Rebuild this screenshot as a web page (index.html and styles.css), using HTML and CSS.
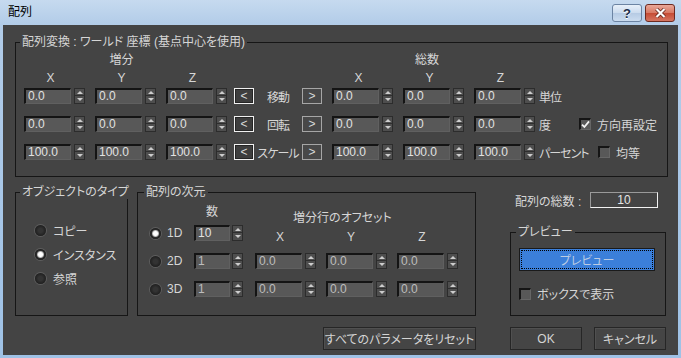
FILE: index.html
```html
<!DOCTYPE html>
<html lang="ja">
<head>
  <meta charset="UTF-8" />
  <title>配列</title>
  <link rel="stylesheet" href="styles.css">
</head>
<body>
<div class="window">

  <div class="titlebar">
    <span class="title">配列</span>
    <div class="caption-btns">
      <div class="cbtn help">?</div>
      <div class="cbtn close">
        <svg width="13" height="10" viewBox="0 0 13 10"><path d="M2.5 1 L10.5 9 M10.5 1 L2.5 9" stroke="#5b1d14" stroke-width="3.6"/><path d="M2.5 1 L10.5 9 M10.5 1 L2.5 9" stroke="#fff" stroke-width="2.2"/></svg>
      </div>
    </div>
  </div>

  <div class="client">

    <!-- transform group -->
    <fieldset class="group">
      <legend>配列変換 : ワールド 座標 (基点中心を使用)</legend>
      <div class="xform">
        <div class="hdr"><span>増分</span><span class="r">総数</span></div>
        <div class="axes">
          <span>X</span><span>Y</span><span>Z</span>
          <span class="r">X</span><span>Y</span><span>Z</span>
        </div>

        <div class="xrow">
          <div class="spin"><div class="field">0.0</div><div class="arrows"></div></div>
          <div class="spin"><div class="field">0.0</div><div class="arrows"></div></div>
          <div class="spin"><div class="field">0.0</div><div class="arrows"></div></div>
          <div class="mover"><div class="mv lit">&lt;</div><span class="mvlabel">移動</span><div class="mv">&gt;</div></div>
          <div class="spin"><div class="field">0.0</div><div class="arrows"></div></div>
          <div class="spin"><div class="field">0.0</div><div class="arrows"></div></div>
          <div class="spin"><div class="field">0.0</div><div class="arrows"></div></div>
          <span class="unit">単位</span>
        </div>

        <div class="xrow">
          <div class="spin"><div class="field">0.0</div><div class="arrows"></div></div>
          <div class="spin"><div class="field">0.0</div><div class="arrows"></div></div>
          <div class="spin"><div class="field">0.0</div><div class="arrows"></div></div>
          <div class="mover"><div class="mv lit">&lt;</div><span class="mvlabel">回転</span><div class="mv">&gt;</div></div>
          <div class="spin"><div class="field">0.0</div><div class="arrows"></div></div>
          <div class="spin"><div class="field">0.0</div><div class="arrows"></div></div>
          <div class="spin"><div class="field">0.0</div><div class="arrows"></div></div>
          <span class="unit">度</span>
          <label class="chk">
            <span class="box"><svg width="9" height="9" viewBox="0 0 9 9"><path d="M1 4.6 L3.4 7 L8 1.4" stroke="#f2f2f2" stroke-width="1.8" fill="none"/></svg></span>方向再設定
          </label>
        </div>

        <div class="xrow">
          <div class="spin"><div class="field">100.0</div><div class="arrows"></div></div>
          <div class="spin"><div class="field">100.0</div><div class="arrows"></div></div>
          <div class="spin"><div class="field">100.0</div><div class="arrows"></div></div>
          <div class="mover"><div class="mv lit">&lt;</div><span class="mvlabel">スケール</span><div class="mv">&gt;</div></div>
          <div class="spin"><div class="field">100.0</div><div class="arrows"></div></div>
          <div class="spin"><div class="field">100.0</div><div class="arrows"></div></div>
          <div class="spin"><div class="field">100.0</div><div class="arrows"></div></div>
          <span class="unit">パーセント</span>
          <label class="chk eq"><span class="box"></span>均等</label>
        </div>
      </div>
    </fieldset>

    <div class="lower">

      <fieldset class="group">
        <legend>オブジェクトのタイプ</legend>
        <div class="types">
          <label class="opt"><i class="radio"></i>コピー</label>
          <label class="opt"><i class="radio on"></i>インスタンス</label>
          <label class="opt"><i class="radio"></i>参照</label>
        </div>
      </fieldset>

      <fieldset class="group dimgroup">
        <legend>配列の次元</legend>
        <div class="dim">
          <span class="num-hdr">数</span>
          <span class="off-hdr">増分行のオフセット</span>

          <label class="opt"><i class="radio on"></i>1D</label>
          <div class="spin small"><div class="field">10</div><div class="arrows"></div></div>
          <span class="ax">X</span><span class="ax">Y</span><span class="ax">Z</span>

          <label class="opt"><i class="radio"></i>2D</label>
          <div class="spin small off"><div class="field">1</div><div class="arrows"></div></div>
          <div class="spin off"><div class="field">0.0</div><div class="arrows"></div></div>
          <div class="spin off"><div class="field">0.0</div><div class="arrows"></div></div>
          <div class="spin off"><div class="field">0.0</div><div class="arrows"></div></div>

          <label class="opt"><i class="radio"></i>3D</label>
          <div class="spin small off"><div class="field">1</div><div class="arrows"></div></div>
          <div class="spin off"><div class="field">0.0</div><div class="arrows"></div></div>
          <div class="spin off"><div class="field">0.0</div><div class="arrows"></div></div>
          <div class="spin off"><div class="field">0.0</div><div class="arrows"></div></div>
        </div>
      </fieldset>

      <div class="side">
        <div class="total">
          <span>配列の総数 :</span>
          <div class="total-field">10</div>
        </div>
        <fieldset class="group preview">
          <legend>プレビュー</legend>
          <div class="preview-body">
            <button class="btn blue">プレビュー</button>
            <label class="chk"><span class="box"></span>ボックスで表示</label>
          </div>
        </fieldset>
      </div>

      <button class="btn reset">すべてのパラメータをリセット</button>
      <div class="okcancel">
        <button class="btn">OK</button>
        <button class="btn">キャンセル</button>
      </div>

    </div>
  </div>
</div>
</body>
</html>
```

FILE: styles.css
```css
* {
  box-sizing: border-box;
  margin: 0;
  padding: 0;
}

body {
  width: 681px;
  height: 358px;
  overflow: hidden;
  font-family: "Liberation Sans", "Noto Sans CJK JP", sans-serif;
  font-size: 12px;
  font-feature-settings: "palt";
  color: #d6d6d6;
  background: #444;
}

.window {
  width: 681px;
  height: 358px;
  padding: 0 3px 3px;
  background: linear-gradient(#c6daef, #b2cce8 25px, #9fc2e6);
}

/* title bar */
.titlebar {
  height: 25px;
  display: flex;
  justify-content: space-between;
  padding: 0 3px 0 5px;
}

.title {
  color: #000;
  line-height: 24px;
  font-size: 12px;
}

.caption-btns {
  display: flex;
  gap: 3px;
  margin-top: 4px;
}

.cbtn {
  width: 30px;
  height: 18px;
  border-radius: 3px;
  display: flex;
  align-items: center;
  justify-content: center;
}

.help {
  border: 1px solid #6c84a3;
  background: linear-gradient(#e8f0f9, #cbdbee 50%, #b5cae3 50%, #cbdcef);
  color: #1d2e48;
  font-weight: bold;
  font-size: 13px;
  text-shadow: 0 1px 0 #fff;
}

.close {
  border: 1px solid #6d2a20;
  background: linear-gradient(#eaa898, #d77863 50%, #c54a33 50%, #d57561);
}

/* client area */
.client {
  height: 330px;
  padding: 10px 10px 0 12px;
  background: #444;
}

.group {
  border: 1px solid #161616;
  min-width: 0;
}

.group legend {
  margin-left: 4px;
  padding: 0 2px;
  line-height: 14px;
  white-space: nowrap;
}

/* transform */
.xform {
  padding: 4px 0 16px 8px;
}

.hdr,
.axes {
  display: flex;
  line-height: 14px;
  height: 14px;
}

.hdr span {
  width: 195px;
  text-align: center;
}

.hdr .r {
  width: 190px;
  margin-left: 113px;
}

.axes {
  margin-top: 4px;
  margin-bottom: 3px;
}

.axes span {
  width: 53px;
  text-align: center;
}

.axes span + span {
  margin-left: 18px;
}

.axes span.r {
  margin-left: 113px;
}

.xrow {
  display: flex;
  align-items: center;
  height: 16px;
}

.xrow + .xrow {
  margin-top: 12px;
}

.xrow .spin + .spin {
  margin-left: 10px;
}

.mover {
  display: flex;
  align-items: center;
  margin: 0 10px 0 7px;
}

.mv {
  width: 20px;
  height: 16px;
  border: 1px solid #a6a6a6;
  background: #484848;
  display: flex;
  align-items: center;
  justify-content: center;
  line-height: 1;
  color: #d8d8d8;
}

.mv.lit {
  border-color: #f0f0f0;
  background: #3e3e3e;
  box-shadow: inset 0 0 0 1px #252525;
}

.mvlabel {
  width: 48px;
  text-align: center;
  white-space: nowrap;
  letter-spacing: -1px;
}

.unit {
  width: 40px;
  margin-left: 4px;
  white-space: nowrap;
  letter-spacing: -1px;
}

/* spinner */
.spin {
  display: flex;
  gap: 3px;
}

.field {
  width: 47px;
  height: 16px;
  padding-left: 2px;
  line-height: 13px;
  background: #585858;
  border-top: 2px solid #141414;
  border-left: 2px solid #141414;
  border-right: 1px solid #606060;
  border-bottom: 1px solid #606060;
  color: #e2e2e2;
  white-space: nowrap;
}

.arrows {
  width: 11px;
  height: 16px;
  border: 1px solid #2c2c2c;
  background: linear-gradient(transparent 6px, #2e2e2e 6px 7px, transparent 7px) #4e4e4e;
  display: flex;
  flex-direction: column;
  align-items: center;
  justify-content: space-around;
}

.arrows::before {
  content: '';
  border: 3px solid transparent;
  border-top: 0;
  border-bottom: 3px solid #cdcdcd;
}

.arrows::after {
  content: '';
  border: 3px solid transparent;
  border-bottom: 0;
  border-top: 3px solid #cdcdcd;
}

.spin.small {
  gap: 2px;
}

.spin.small .field {
  width: 36px;
}

.spin.off .field {
  color: #bdbdbd;
}

/* checkbox + radio */
.chk {
  display: flex;
  align-items: center;
  gap: 6px;
  white-space: nowrap;
}

.chk.eq {
  margin-left: 19px;
}

.box {
  width: 12px;
  height: 12px;
  background: #585858;
  border-top: 2px solid #151515;
  border-left: 2px solid #151515;
  border-right: 1px solid #666;
  border-bottom: 1px solid #666;
  display: flex;
  align-items: center;
  justify-content: center;
}

.opt {
  display: flex;
  align-items: center;
  gap: 7px;
  height: 14px;
  white-space: nowrap;
}

.radio {
  width: 11px;
  height: 11px;
  border-radius: 50%;
  background: radial-gradient(circle, #333 0 2px, #222 5px);
  box-shadow: 0 0 0 1px #5e5e5e;
}

.radio.on {
  background: radial-gradient(circle, #fff 0 2px, #b8b8b8 3px, #2c2c2c 4px, #1e1e1e 5.5px);
}

/* lower part */
.lower {
  display: grid;
  grid-template-columns: 113px 339px 181px;
  column-gap: 9px;
  row-gap: 11px;
  margin-top: 8px;
}

.types {
  display: flex;
  flex-direction: column;
  gap: 10px;
  padding: 24px 0 0 19px;
}

.dimgroup legend {
  margin-left: 6px;
}

.dim {
  display: grid;
  grid-template-columns: 34px 51px 61px 61px 61px;
  grid-template-rows: 20px 16px 28px 28px;
  column-gap: 10px;
  align-items: end;
  padding: 6px 0 0 12px;
}

.dim .opt {
  gap: 6px;
  height: 16px;
}

.num-hdr {
  grid-column: 2;
  width: 36px;
  text-align: center;
  align-self: start;
  line-height: 14px;
}

.off-hdr {
  grid-column: 3 / 6;
  padding-left: 38px;
  line-height: 14px;
  white-space: nowrap;
}

.ax {
  width: 50px;
  text-align: center;
  line-height: 14px;
  margin-bottom: -3px;
}

.side {
  padding-left: 25px;
}

.total {
  display: flex;
  align-items: center;
  height: 16px;
  margin-top: 7px;
  padding: 0 8px 0 5px;
}

.total-field {
  width: 68px;
  height: 16px;
  margin-left: auto;
  border: 1px solid #9a9a9a;
  border-right-color: #f2f2f2;
  border-bottom-color: #f2f2f2;
  text-align: center;
  line-height: 14px;
  color: #e4e4e4;
}

.preview {
  margin-top: 17px;
}

.preview legend {
  margin-left: 5px;
}

.preview-body {
  padding: 9px 10px 13px 8px;
}

.preview-body .chk {
  margin-top: 14px;
}

.btn {
  height: 23px;
  font: inherit;
  font-feature-settings: "palt";
  color: #d4d4d4;
  background: #454545;
  border: 1px solid #262626;
  box-shadow: inset 1px 1px 0 #505050;
}

.btn.blue {
  width: 136px;
  display: block;
  background: #3b7fda;
  border-color: #1a1a1a;
  box-shadow: none;
  color: #bccbe2;
  outline: 1px dotted #000;
  outline-offset: -3px;
}

.reset {
  grid-column: 2;
  justify-self: end;
  width: 153px;
}

.okcancel {
  display: flex;
  justify-content: space-between;
  padding-left: 25px;
}

.okcancel .btn {
  width: 72px;
}
```
